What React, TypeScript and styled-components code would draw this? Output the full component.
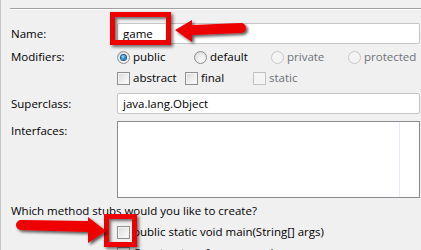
import styled, { createGlobalStyle, css } from "styled-components";

const GlobalStyle = createGlobalStyle`
  html, body {
    margin: 0;
    padding: 0;
    background: #f0f0f0;
  }
  body {
    font-family: "Open Sans", "Noto Sans", Arial, sans-serif;
    font-size: 11.5px;
    color: #000;
  }
`;

const Window = styled.div`
  position: relative;
  width: 421px;
  height: 250px;
  overflow: hidden;
  background: #f0f0f0;
  border-left: 1px solid #c4c4c4;
  box-sizing: border-box;
  padding-top: 8px;
`;

const Separator = styled.div`
  margin-left: 9px;
  border-top: 1px solid #a0a0a0;
  border-bottom: 1px solid #ffffff;
`;

const Form = styled.div`
  display: flex;
  flex-direction: column;
  padding-left: 10px;
  padding-right: 1px;
`;

const Row = styled.div<{ $top: number; $height: number; $align?: string }>`
  display: grid;
  grid-template-columns: 106px 1fr;
  align-items: ${(p) => p.$align || "center"};
  margin-top: ${(p) => p.$top}px;
  height: ${(p) => p.$height}px;
`;

const FullRow = styled.div<{ $top: number; $height: number }>`
  display: flex;
  align-items: center;
  margin-top: ${(p) => p.$top}px;
  height: ${(p) => p.$height}px;
  white-space: nowrap;
`;

const Label = styled.span<{ $padTop?: number }>`
  line-height: 16px;
  padding-top: ${(p) => p.$padTop || 0}px;
`;

const TextField = styled.div`
  height: 21px;
  box-sizing: border-box;
  background: #fff;
  border: 1px solid #c5c5c5;
  border-radius: 2px;
  padding-left: 5px;
  display: flex;
  align-items: center;
  line-height: 16px;
`;

const ListBox = styled.div`
  height: 77px;
  box-sizing: border-box;
  background: #fff;
  border: 1px solid #8a8a8f;
  display: flex;
  justify-content: flex-end;
`;

const ScrollEdge = styled.div`
  width: 19px;
  border-left: 1px solid #e3ecf8;
`;

const OptionGrid = styled.div<{ $col: number }>`
  display: grid;
  grid-template-columns: repeat(4, ${(p) => p.$col}px);
  align-items: center;
  white-space: nowrap;
`;

const Option = styled.label<{ $disabled?: boolean }>`
  display: flex;
  align-items: center;
  gap: 3px;
  line-height: 16px;
  color: ${(p) => (p.$disabled ? "#6d7077" : "#000")};
`;

const Radio = styled.span<{ $checked?: boolean; $disabled?: boolean }>`
  width: 13px;
  height: 13px;
  box-sizing: border-box;
  border-radius: 50%;
  border: 1px solid ${(p) => (p.$disabled ? "#c6c6c6" : "#8e8f8f")};
  background: ${(p) =>
    p.$disabled
      ? "#f4f4f4"
      : "radial-gradient(circle at 60% 65%, #ffffff 0%, #e6e6e6 55%, #cfcfcf 100%)"};
  display: flex;
  align-items: center;
  justify-content: center;
  flex: none;
  ${(p) =>
    p.$checked &&
    css`
      &::after {
        content: "";
        width: 5px;
        height: 5px;
        border-radius: 50%;
        background: radial-gradient(circle at 40% 35%, #9fdcfb 0%, #2a8ad4 50%, #0b4c8c 100%);
        box-shadow: 0 0 0 1px #1c5180;
      }
    `}
`;

const Check = styled.span<{ $disabled?: boolean }>`
  width: 13px;
  height: 13px;
  box-sizing: border-box;
  border: 1px solid ${(p) => (p.$disabled ? "#c2c2c2" : "#8e8f8f")};
  background: ${(p) =>
    p.$disabled ? "#f4f4f4" : "linear-gradient(135deg, #d8d8d8 0%, #f0f0f0 60%, #ffffff 100%)"};
  box-shadow: inset 0 0 0 1px #f4f4f4;
  flex: none;
`;

const CheckLine = styled.div`
  display: flex;
  align-items: center;
  gap: 3px;
  margin-left: 106px;
  line-height: 16px;
  white-space: nowrap;
`;

const Highlight = styled.div<{ $x: number; $y: number; $w: number; $h: number }>`
  position: absolute;
  left: ${(p) => p.$x}px;
  top: ${(p) => p.$y}px;
  width: ${(p) => p.$w}px;
  height: ${(p) => p.$h}px;
  box-sizing: border-box;
  border: 5px solid #ee0000;
  box-shadow: 2px 2px 3px rgba(0, 0, 0, 0.55), inset 2px 2px 3px rgba(0, 0, 0, 0.55);
`;

const ArrowSvg = styled.svg<{ $x: number; $y: number }>`
  position: absolute;
  left: ${(p) => p.$x}px;
  top: ${(p) => p.$y}px;
  overflow: visible;
`;

function ArrowShadow({ id }: { id: string }) {
  return (
    <defs>
      <filter id={id} x="-20%" y="-40%" width="140%" height="180%">
        <feDropShadow dx="2" dy="2" stdDeviation="1.4" floodColor="#000" floodOpacity="0.65" />
      </filter>
    </defs>
  );
}

export default function App() {
  return (
    <>
      <GlobalStyle />
      <Window>
        <Separator />
        <Form>
          <Row $top={13} $height={21}>
            <Label>Name:</Label>
            <TextField>game</TextField>
          </Row>
          <Row $top={3} $height={20}>
            <Label>Modifiers:</Label>
            <OptionGrid $col={77}>
              <Option>
                <Radio $checked />
                public
              </Option>
              <Option>
                <Radio />
                default
              </Option>
              <Option $disabled>
                <Radio $disabled />
                private
              </Option>
              <Option $disabled>
                <Radio $disabled />
                protected
              </Option>
            </OptionGrid>
          </Row>
          <Row $top={3} $height={16}>
            <span />
            <OptionGrid $col={68}>
              <Option>
                <Check />
                abstract
              </Option>
              <Option>
                <Check />
                final
              </Option>
              <Option $disabled>
                <Check $disabled />
                static
              </Option>
            </OptionGrid>
          </Row>
          <Row $top={7} $height={21}>
            <Label>Superclass:</Label>
            <TextField>java.lang.Object</TextField>
          </Row>
          <Row $top={7} $height={77} $align="start">
            <Label $padTop={2}>Interfaces:</Label>
            <ListBox>
              <ScrollEdge />
            </ListBox>
          </Row>
          <FullRow $top={4} $height={16}>
            Which method stubs would you like to create?
          </FullRow>
          <FullRow $top={6} $height={16}>
            <CheckLine>
              <Check />
              public static void main(String[] args)
            </CheckLine>
          </FullRow>
          <FullRow $top={5} $height={16}>
            <CheckLine>
              <Check />
              Constructors from superclass
            </CheckLine>
          </FullRow>
        </Form>

        <Highlight $x={109} $y={12} $w={61} $h={33} />
        <Highlight $x={103} $y={214} $w={33} $h={33} />

        <ArrowSvg $x={170} $y={15} width={80} height={32}>
          <ArrowShadow id="sh1" />
          <path
            d="M4 15 L21 5 L21 10 L70 8 A5 5 0 0 1 70 18 L21 20 L21 27 Z"
            fill="#ee0000"
            filter="url(#sh1)"
          />
        </ArrowSvg>
        <ArrowSvg $x={14} $y={212} width={96} height={36}>
          <ArrowShadow id="sh2" />
          <path
            d="M91 19 L73 5 L73 9 L6 8 A5 5 0 0 0 6 18 L73 20 L73 31 Z"
            fill="#ee0000"
            filter="url(#sh2)"
          />
        </ArrowSvg>
      </Window>
    </>
  );
}
